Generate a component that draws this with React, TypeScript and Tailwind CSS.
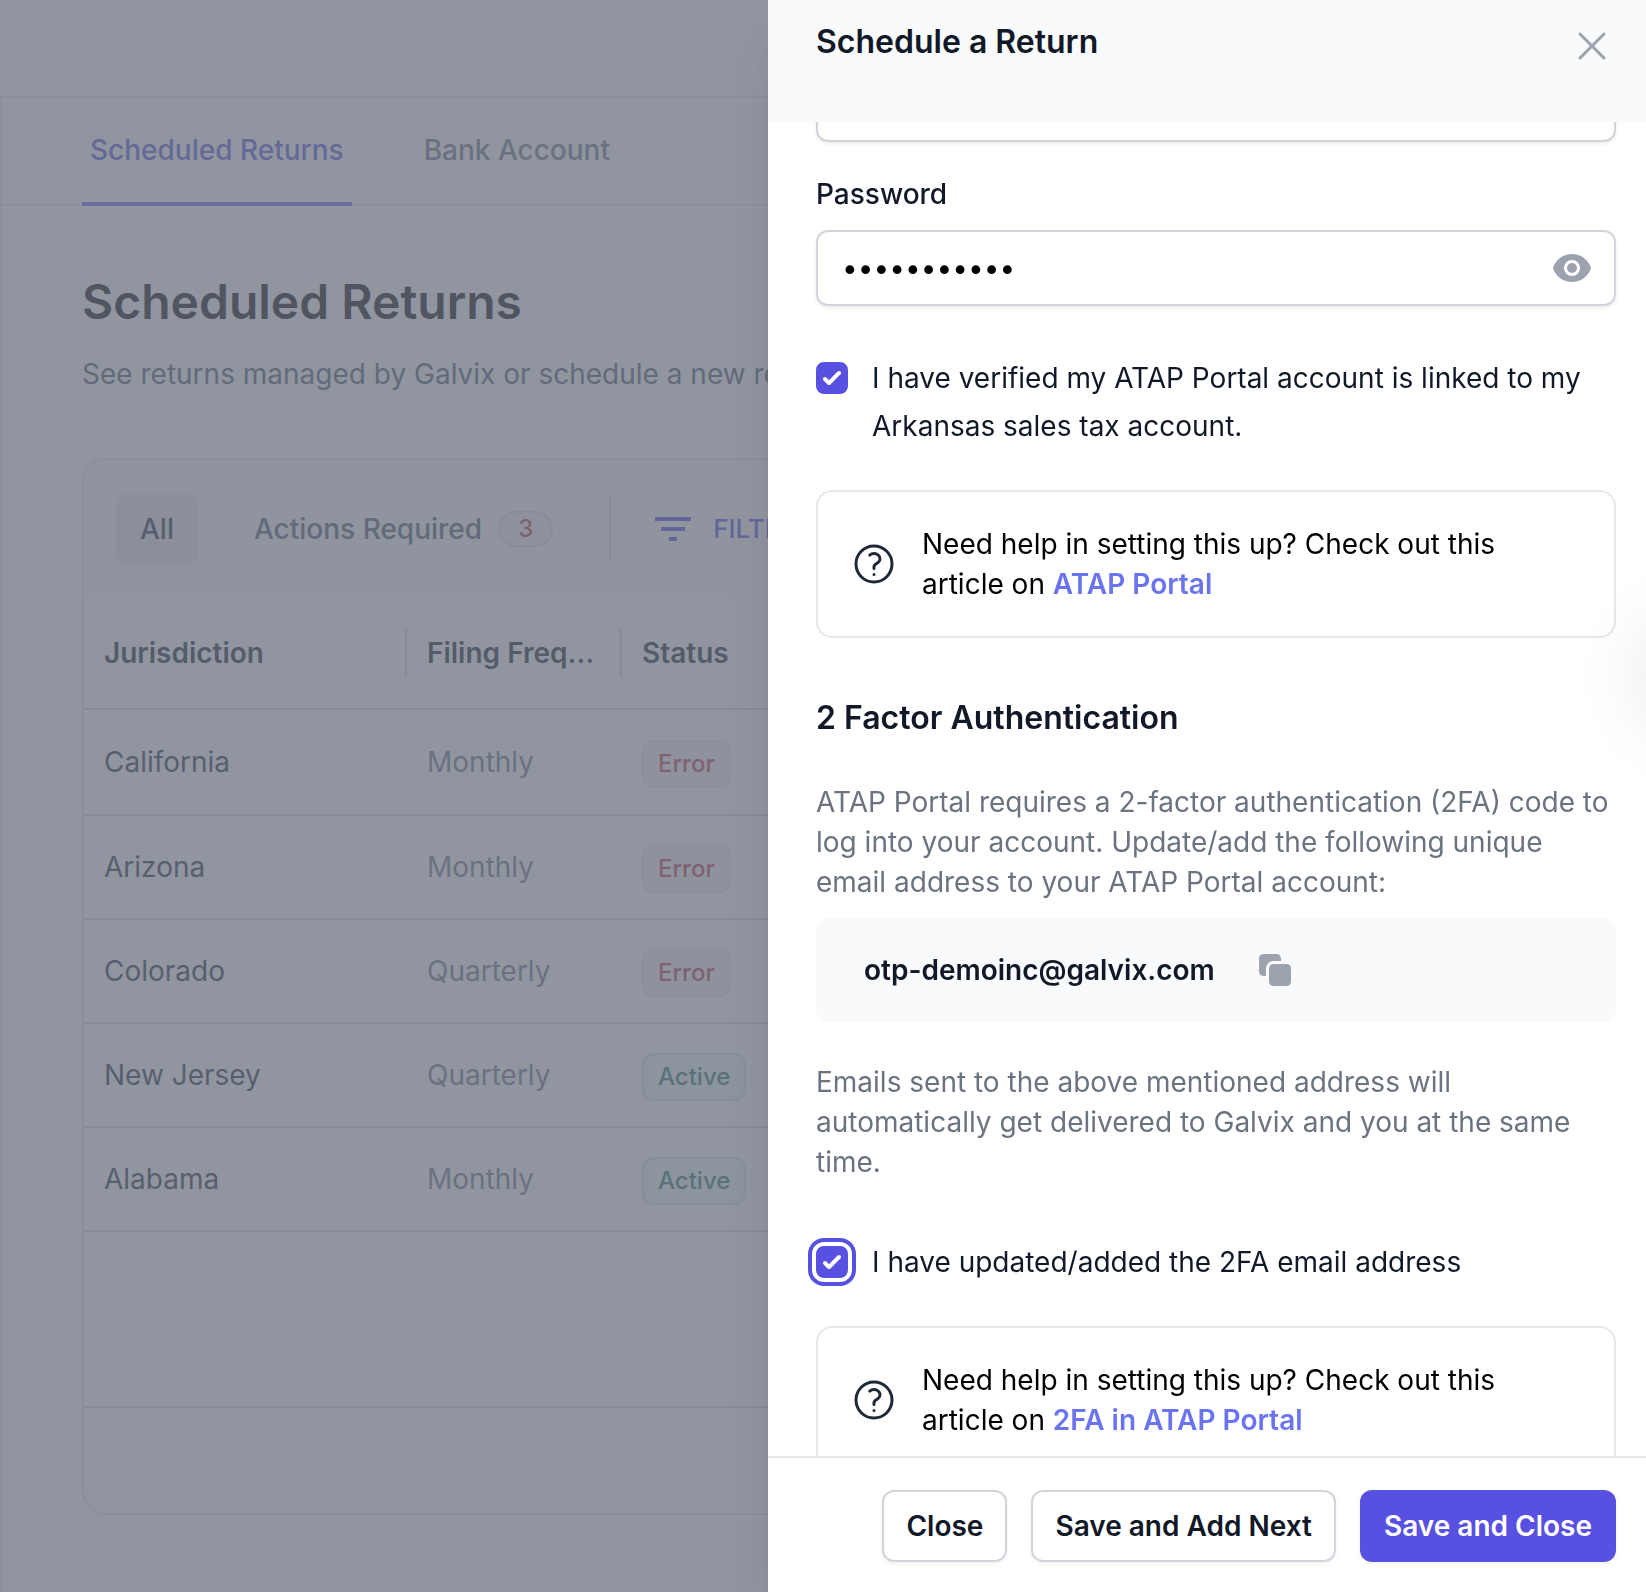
import { useState } from 'react';
import type { ReactNode } from 'react';

type ScheduledReturn = {
  jurisdiction: string;
  frequency: string;
  status: 'Error' | 'Active';
};

const returns: ScheduledReturn[] = [
  { jurisdiction: 'California', frequency: 'Monthly', status: 'Error' },
  { jurisdiction: 'Arizona', frequency: 'Monthly', status: 'Error' },
  { jurisdiction: 'Colorado', frequency: 'Quarterly', status: 'Error' },
  { jurisdiction: 'New Jersey', frequency: 'Quarterly', status: 'Active' },
  { jurisdiction: 'Alabama', frequency: 'Monthly', status: 'Active' },
];

const statusStyles = {
  Error: 'bg-[#faf4f4] text-[#b33a3f] ring-[#dc2626]/10',
  Active: 'bg-[#f0faf8] text-[#24705f] ring-[#047857]/15',
};

function CloseIcon() {
  return (
    <svg className="size-12" viewBox="0 0 24 24" fill="none" stroke="currentColor" strokeWidth={1.5} strokeLinecap="round" aria-hidden="true">
      <path d="M6 18 18 6M6 6l12 12" />
    </svg>
  );
}

function EyeIcon() {
  return (
    <svg className="size-10" viewBox="0 0 20 20" fill="currentColor" aria-hidden="true">
      <path d="M10 12.5a2.5 2.5 0 1 0 0-5 2.5 2.5 0 0 0 0 5z" />
      <path
        fillRule="evenodd"
        d="M.458 10C1.732 5.943 5.522 3 10 3s8.268 2.943 9.542 7c-1.274 4.057-5.064 7-9.542 7S1.732 14.057.458 10zM14 10a4 4 0 1 1-8 0 4 4 0 0 1 8 0z"
      />
    </svg>
  );
}

function QuestionIcon() {
  return (
    <svg className="size-12 shrink-0 text-[#1f2937]" viewBox="0 0 24 24" fill="none" stroke="currentColor" strokeWidth={1.5} strokeLinecap="round" strokeLinejoin="round" aria-hidden="true">
      <path d="M9.879 7.519c1.171-1.025 3.071-1.025 4.242 0 1.172 1.025 1.172 2.687 0 3.712-.203.179-.43.326-.67.442-.745.361-1.45.999-1.45 1.827v.75M21 12a9 9 0 1 1-18 0 9 9 0 0 1 18 0Zm-9 5.25h.008v.008H12v-.008Z" />
    </svg>
  );
}

function CopyIcon() {
  return (
    <svg className="size-10" viewBox="0 0 20 20" fill="currentColor" aria-hidden="true">
      <path d="M2 4.25A2.25 2.25 0 0 1 4.25 2h6.5A2.25 2.25 0 0 1 13 4.25V5.5H9.25A3.75 3.75 0 0 0 5.5 9.25V13H4.25A2.25 2.25 0 0 1 2 10.75v-6.5z" />
      <path d="M9.25 7A2.25 2.25 0 0 0 7 9.25v6.5A2.25 2.25 0 0 0 9.25 18h6.5A2.25 2.25 0 0 0 18 15.75v-6.5A2.25 2.25 0 0 0 15.75 7h-6.5z" />
    </svg>
  );
}

function FilterIcon() {
  return (
    <svg className="size-12" viewBox="0 0 24 24" fill="currentColor" aria-hidden="true">
      <path d="M10 18h4v-2h-4v2zM3 6v2h18V6H3zm3 7h12v-2H6v2z" />
    </svg>
  );
}

type CheckProps = {
  id: string;
  focused?: boolean;
  children: ReactNode;
};

function Check({ id, focused, children }: CheckProps) {
  const [checked, setChecked] = useState(true);

  return (
    <div className="flex items-start gap-6">
      <span className="grid h-12 place-items-center">
        <input
          id={id}
          type="checkbox"
          checked={checked}
          onChange={() => setChecked(!checked)}
          className={`col-start-1 row-start-1 size-8 appearance-none rounded-lg border-2 border-[#d1d5db] checked:border-[#5850e1] checked:bg-[#5850e1] ${
            focused ? 'outline-4 outline-offset-4 outline-[#5850e1]' : ''
          }`}
        />
        {checked && (
          <svg className="pointer-events-none col-start-1 row-start-1 size-8 text-white" viewBox="0 0 16 16" fill="currentColor" aria-hidden="true">
            <path d="M12.207 4.793a1 1 0 0 1 0 1.414l-5 5a1 1 0 0 1-1.414 0l-2-2a1 1 0 0 1 1.414-1.414L6.5 9.086l4.293-4.293a1 1 0 0 1 1.414 0z" />
          </svg>
        )}
      </span>
      <label htmlFor={id} className="text-[28px] leading-[48px] text-[#111827]">
        {children}
      </label>
    </div>
  );
}

function HelpCard({ article }: { article: string }) {
  return (
    <div className="mt-10 flex items-center gap-6 rounded-2xl border-2 border-[#e5e7eb] p-8">
      <QuestionIcon />
      <p className="text-[28px] leading-[40px] text-black">
        Need help in setting this up? Check out this article on{' '}
        <a href="#help" className="font-semibold text-[#6b74f0]">
          {article}
        </a>
      </p>
    </div>
  );
}

function ReturnsPage() {
  return (
    <div className="flex h-full flex-col bg-white">
      <div className="h-24 shrink-0" />
      <main className="grow border-t-2 border-l-2 border-[#e5e7eb]">
        <nav className="flex gap-16 border-b-2 border-[#e5e7eb] px-20 text-[28px] leading-[40px] font-medium">
          <a href="#returns" className="-mb-[2px] border-b-4 border-[#6366f1] px-2 py-8 text-[#5450d8]">
            Scheduled Returns
          </a>
          <a href="#bank" className="-mb-[2px] border-b-4 border-transparent px-2 py-8 text-[#6b7280]">
            Bank Account
          </a>
        </nav>

        <div className="px-20 pt-16">
          <h1 className="text-[48px] leading-[64px] font-semibold text-black">Scheduled Returns</h1>
          <p className="mt-4 text-[28px] leading-[48px] text-[#4b5563]">
            See returns managed by Galvix or schedule a new return.
          </p>

          <section className="mt-[60px] overflow-hidden rounded-3xl border-2 border-[#e5e7eb]">
            <div className="flex h-[138px] items-center gap-8 bg-[#f9fafb] px-8 text-[28px] leading-[40px] font-medium">
              <button type="button" className="rounded-xl bg-[#e5e7eb] px-6 py-4 text-[#1f2937]">
                All
              </button>
              <button type="button" className="flex items-center gap-4 px-6 text-[#4b5563]">
                Actions Required
                <span className="rounded-full bg-[#faf4f4] px-5 text-[24px] leading-[36px] text-[#b33a3f] ring-2 ring-[#dc2626]/15 ring-inset">
                  3
                </span>
              </button>
              <div className="h-16 w-0.5 bg-[#d1d5db]" />
              <button type="button" className="flex items-center gap-4 px-1.5 text-[26px] text-[#4f46e5]">
                <FilterIcon />
                FILTERS
              </button>
            </div>

            <table className="w-full table-fixed text-left text-[28px] leading-[40px]">
              <thead>
                <tr className="h-[111px] border-b-2 border-[#d1d5db] text-[#111827]">
                  <th className="w-[323px] font-semibold">
                    <div className="truncate border-r-2 border-[#d1d5db] px-5 py-1">Jurisdiction</div>
                  </th>
                  <th className="w-[215px] font-semibold">
                    <div className="truncate border-r-2 border-[#d1d5db] px-5 py-1">Filing Frequency</div>
                  </th>
                  <th className="px-5 font-semibold">Status</th>
                </tr>
              </thead>
              <tbody>
                {returns.map((row) => (
                  <tr key={row.jurisdiction} className="h-[104px] border-b-2 border-[#d1d5db] first:h-[106px]">
                    <td className="px-5 text-[#1f2937]">{row.jurisdiction}</td>
                    <td className="px-5 text-[#6b7280]">{row.frequency}</td>
                    <td className="px-5 pt-1">
                      <span
                        className={`inline-flex rounded-xl px-4 py-2 text-[24px] leading-[32px] font-medium ring-2 ring-inset ${statusStyles[row.status]}`}
                      >
                        {row.status}
                      </span>
                    </td>
                  </tr>
                ))}
              </tbody>
            </table>
            <div className="h-[174px]" />
            <div className="h-[107px] border-t-2 border-[#d1d5db]" />
          </section>
        </div>
      </main>
    </div>
  );
}

function ReturnDrawer() {
  const [showPassword, setShowPassword] = useState(false);
  const [password, setPassword] = useState('galvix-demo');
  const [username, setUsername] = useState('');

  return (
    <aside
      role="dialog"
      aria-labelledby="drawer-title"
      className="fixed inset-y-0 right-0 flex w-full max-w-[878px] flex-col bg-white shadow-[0_40px_50px_-10px_rgba(0,0,0,0.1),0_16px_20px_-12px_rgba(0,0,0,0.1)]"
    >
      <header className="z-10 flex items-start justify-between bg-[#f9fafb] pt-[18px] pr-[30px] pb-14 pl-12">
        <h2 id="drawer-title" className="text-[32px] leading-[48px] font-semibold text-[#111827]">
          Schedule a Return
        </h2>
        <button type="button" aria-label="Close panel" className="mt-1 -mb-1 text-[#9ca3af]">
          <CloseIcon />
        </button>
      </header>

      <div className="relative min-h-0 grow overflow-hidden pr-[30px] pl-12">
        <input
          type="text"
          aria-label="Username"
          value={username}
          onChange={(e) => setUsername(e.target.value)}
          className="-mt-14 block h-[76px] w-full rounded-xl border-2 border-[#d1d5db] bg-white px-6 text-[28px] shadow-[0_2px_4px_rgba(0,0,0,0.08)]"
        />

        <label htmlFor="password" className="mt-8 block text-[28px] leading-[40px] font-medium text-[#111827]">
          Password
        </label>
        <div className="mt-4 flex h-[76px] items-center rounded-xl border-2 border-[#d1d5db] bg-white pr-[22px] pl-6 shadow-[0_2px_4px_rgba(0,0,0,0.08)]">
          <input
            id="password"
            type={showPassword ? 'text' : 'password'}
            value={password}
            onChange={(e) => setPassword(e.target.value)}
            className="min-w-0 grow text-[28px] leading-[40px] text-black outline-none"
          />
          <button
            type="button"
            aria-label="Show password"
            onClick={() => setShowPassword(!showPassword)}
            className="text-[#9ca3af]"
          >
            <EyeIcon />
          </button>
        </div>

        <div className="mt-12">
          <Check id="verified">
            I have verified my ATAP Portal account is linked to my Arkansas sales tax account.
          </Check>
        </div>
        <HelpCard article="ATAP Portal" />

        <h3 className="mt-14 text-[32px] leading-[48px] font-semibold text-[#111827]">2 Factor Authentication</h3>
        <p className="mt-10 text-[28px] leading-[40px] text-[#6b7280]">
          ATAP Portal requires a 2-factor authentication (2FA) code to log into your account. Update/add the
          following unique email address to your ATAP Portal account:
        </p>
        <div className="mt-4 flex items-center gap-10 rounded-xl bg-[#f9fafb] px-12 py-8">
          <span className="text-[28px] leading-[40px] font-semibold text-[#111827]">otp-demoinc@galvix.com</span>
          <button type="button" aria-label="Copy email address" className="text-[#9ca3af]">
            <CopyIcon />
          </button>
        </div>
        <p className="mt-10 text-[28px] leading-[40px] text-[#6b7280]">
          Emails sent to the above mentioned address will automatically get delivered to Galvix and you at the same
          time.
        </p>

        <div className="mt-14">
          <Check id="updated" focused>
            I have updated/added the 2FA email address
          </Check>
        </div>
        <HelpCard article="2FA in ATAP Portal" />

        {/* soft shadow of the collapsed chat launcher */}
        <div className="pointer-events-none absolute top-[505px] left-full size-24 rounded-full shadow-[0_0_80px_rgba(0,0,0,0.12)]" />
      </div>

      <footer className="flex justify-end gap-6 border-t-2 border-[#e5e7eb] bg-white pt-8 pr-[30px] pb-[30px] pl-12 text-[28px] leading-[40px] font-semibold">
        <button type="button" className="rounded-xl bg-white px-6 py-4 text-[#111827] shadow-[0_2px_4px_rgba(0,0,0,0.05)] ring-2 ring-[#d1d5db] ring-inset">
          Close
        </button>
        <button type="button" className="rounded-xl bg-white px-6 py-4 text-[#111827] shadow-[0_2px_4px_rgba(0,0,0,0.05)] ring-2 ring-[#d1d5db] ring-inset">
          Save and Add Next
        </button>
        <button type="button" className="rounded-xl bg-[#5850e1] px-6 py-4 text-white shadow-[0_2px_4px_rgba(0,0,0,0.05)]">
          Save and Close
        </button>
      </footer>
    </aside>
  );
}

function App() {
  return (
    <div className="h-screen overflow-hidden font-['Inter',sans-serif]">
      <ReturnsPage />
      <div className="fixed inset-0 bg-[#6b7280]/75" />
      <ReturnDrawer />
    </div>
  );
}

export default App;
